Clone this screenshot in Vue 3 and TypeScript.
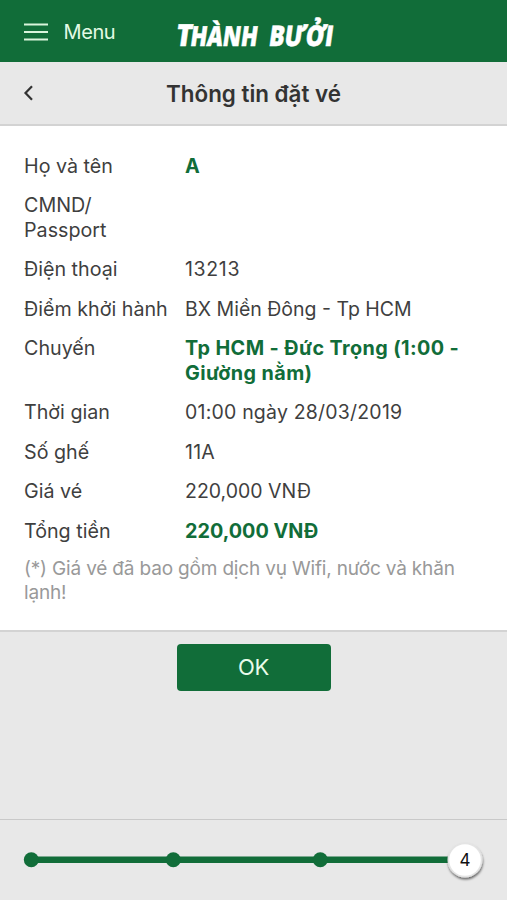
<script setup lang="ts">
interface Row {
  label: string
  value: string
  tone?: string
}

const rows: Row[] = [
  { label: 'Họ và tên', value: 'A', tone: 'strong' },
  { label: 'CMND/ Passport', value: '' },
  { label: 'Điện thoại', value: '13213', tone: 'digits' },
  { label: 'Điểm khởi hành', value: 'BX Miền Đông - Tp HCM' },
  { label: 'Chuyến', value: 'Tp HCM - Đức Trọng (1:00 - Giường nằm)', tone: 'strong route' },
  { label: 'Thời gian', value: '01:00 ngày 28/03/2019', tone: 'date' },
  { label: 'Số ghế', value: '11A', tone: 'date' },
  { label: 'Giá vé', value: '220,000 VNĐ' },
  { label: 'Tổng tiền', value: '220,000 VNĐ', tone: 'strong' },
]
</script>

<template>
  <div class="screen">
    <header class="topbar">
      <button class="menu" type="button">
        <svg class="burger" width="24" height="18" viewBox="0 0 24 18">
          <path d="M0 1.5H24M0 9H24M0 16.5H24" stroke="#d9f5dc" stroke-width="1.8" />
        </svg>
        <span>Menu</span>
      </button>
      <svg class="logo" width="180" height="62" viewBox="0 0 180 62">
        <g class="logo-text" transform="translate(0 46) skewX(-8)">
          <text x="4" y="0" font-size="30.5" textLength="16" lengthAdjust="spacingAndGlyphs">T</text>
          <text x="18.5" y="0" font-size="27.5" textLength="67" lengthAdjust="spacingAndGlyphs">HÀNH</text>
          <text x="97" y="0" font-size="28.5" textLength="64" lengthAdjust="spacingAndGlyphs">BƯỞI</text>
        </g>
      </svg>
    </header>

    <div class="titlebar">
      <svg class="back" width="12" height="18" viewBox="0 0 12 18">
        <path d="M10 2.3L3.5 9L10 15.7" fill="none" stroke="#333" stroke-width="2.2" />
      </svg>
      <h1>Thông tin đặt vé</h1>
    </div>

    <main class="details">
      <dl>
        <div v-for="row in rows" :key="row.label" class="row">
          <dt>{{ row.label }}</dt>
          <dd :class="row.tone">{{ row.value }}</dd>
        </div>
      </dl>
      <p class="note">(*) Giá vé đã bao gồm dịch vụ Wifi, nước và khăn lạnh!</p>
    </main>

    <div class="action">
      <button class="ok" type="button">OK</button>
    </div>

    <footer class="steps">
      <svg width="507" height="80" viewBox="0 0 507 80">
        <defs>
          <filter id="shadow" x="-30%" y="-30%" width="160%" height="160%">
            <feDropShadow dx="0.5" dy="2" stdDeviation="1.2" flood-color="#000" flood-opacity="0.55" />
          </filter>
        </defs>
        <path d="M31 39.7H460" stroke="#116d39" stroke-width="6.4" />
        <circle v-for="x in [31.3, 173.3, 320.3]" :key="x" :cx="x" cy="39.7" r="7.5" fill="#116d39" />
        <circle cx="465" cy="40" r="17.5" fill="#e4e4e4" filter="url(#shadow)" />
        <circle cx="465" cy="40" r="15.8" fill="#fff" />
        <text class="step" x="465" y="46" text-anchor="middle">4</text>
      </svg>
    </footer>
  </div>
</template>

<style>
body {
  margin: 0;
  background: #e8e8e8;
}
</style>

<style scoped>
.screen {
  display: flex;
  flex-direction: column;
  height: 900px;
  background: #e8e8e8;
  color: #3f3f3f;
  font-family: Inter, "Liberation Sans", sans-serif;
  overflow: hidden;
}
button {
  border: 0;
  padding: 0;
  font-family: inherit;
}
.topbar {
  display: flex;
  height: 62px;
  flex: none;
  box-sizing: border-box;
  padding-left: 24px;
  background: #116d39;
}
.menu {
  display: flex;
  align-items: center;
  gap: 15.5px;
  width: 147px;
  height: 63px;
  background: none;
  color: #e3fbe5;
  font-size: 20px;
  letter-spacing: -0.4px;
}
.logo-text {
  fill: #fff;
  stroke: #fff;
  stroke-width: 0.5;
  font-family: "Open Sans", sans-serif;
  font-weight: 800;
}
.titlebar {
  display: grid;
  grid-template-columns: 24px 1fr 24px;
  align-items: center;
  height: 64px;
  flex: none;
  box-sizing: border-box;
  padding: 0 22px;
  border-bottom: 2px solid #d3d3d3;
}
h1 {
  margin: 0;
  text-align: center;
  font-size: 22.4px;
  font-weight: 600;
  color: #333;
}
.details {
  height: 504px;
  flex: none;
  box-sizing: border-box;
  padding: 27.7px 24px 0;
  background: #fff;
}
dl {
  display: flex;
  flex-direction: column;
  gap: 15.3px;
  margin: 0;
  font-size: 19.7px;
  line-height: 24.3px;
}
.row {
  display: grid;
  grid-template-columns: 149px 1fr;
  column-gap: 12px;
}
dd {
  margin: 0;
  font-size: 19.5px;
}
.digits {
  letter-spacing: 0.65px;
}
.date {
  letter-spacing: 0.2px;
}
.strong {
  color: #116d39;
  font-size: 19.8px;
  font-weight: 700;
}
.route {
  letter-spacing: 0.4px;
}
.note {
  margin: 13.5px 0 0;
  color: #999;
  font-size: 19px;
  line-height: 24px;
  letter-spacing: -0.17px;
}
.action {
  display: flex;
  justify-content: center;
  height: 189px;
  flex: none;
  box-sizing: border-box;
  padding-top: 11.5px;
  border-top: 2px solid #d3d3d3;
}
.ok {
  width: 154px;
  height: 47px;
  border-radius: 4px;
  background: #116d39;
  color: #e9fcea;
  font-size: 22px;
  letter-spacing: -0.4px;
}
.steps {
  height: 81px;
  box-sizing: border-box;
  border-top: 1px solid #c9c9c9;
}
.steps svg {
  display: block;
}
.step {
  fill: #111;
  font-size: 17px;
}
</style>
